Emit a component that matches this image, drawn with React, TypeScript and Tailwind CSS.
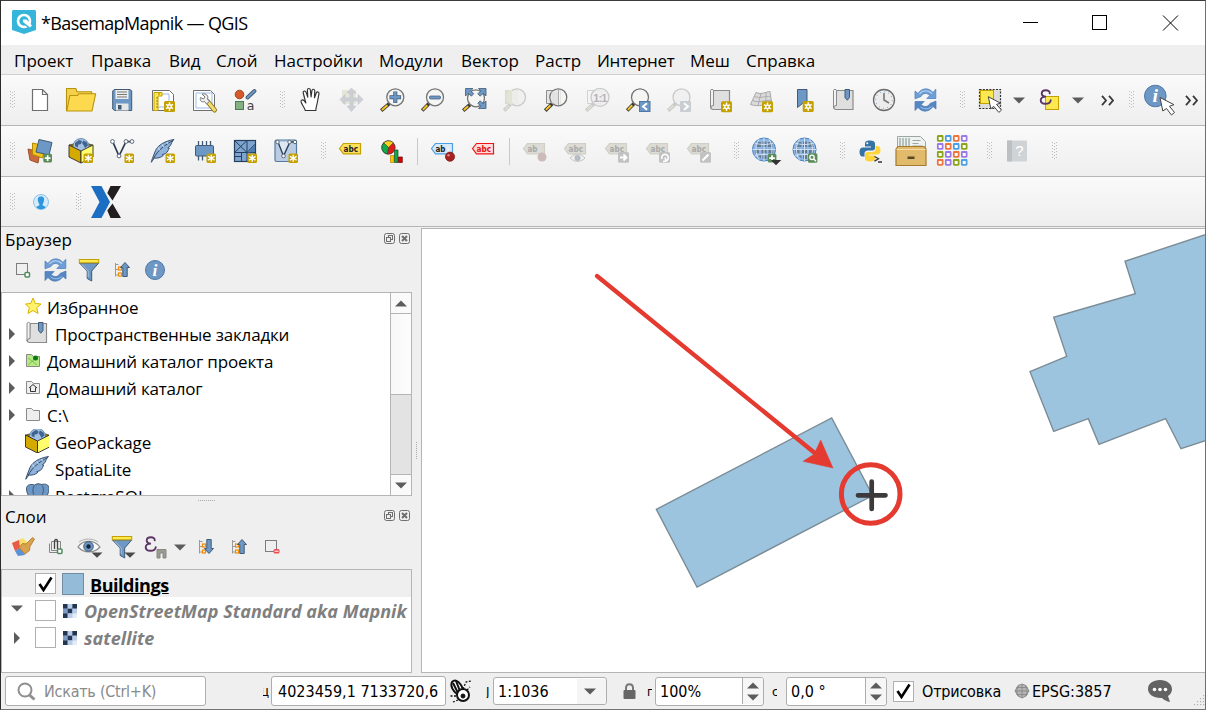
import type { ReactNode } from "react";

const BLUE = "#6d97c4";
const NAVY = "#415a75";

function Ic({ children, className = "" }: { children: ReactNode; className?: string }) {
  return (
    <svg width="32" height="32" viewBox="0 0 32 32" className={"shrink-0 overflow-visible " + className} fill="none">
      {children}
    </svg>
  );
}

function Handle({ className = "" }: { className?: string }) {
  const dots = [0, 1, 2, 3, 4, 5];
  return (
    <svg width="6" height="20" viewBox="0 0 6 20" className={"shrink-0 " + className} fill="#bdbdbd">
      {dots.map((i) => (
        <g key={i}>
          <rect x="1" y={1 + i * 3} width="1" height="1" />
          <rect x="3" y={2 + i * 3} width="1" height="1" />
          <rect x="5" y={1 + i * 3} width="1" height="1" />
        </g>
      ))}
    </svg>
  );
}

function Sep({ className = "" }: { className?: string }) {
  return <div className={"h-[27px] w-px shrink-0 bg-[#c9c9c9] " + className} />;
}

function Down({ className = "" }: { className?: string }) {
  return (
    <svg width="12" height="7" viewBox="0 0 12 7" className={"shrink-0 " + className}>
      <path d="M0 .5h12L6 6.5z" fill="#5c5c5c" />
    </svg>
  );
}

function Up() {
  return (
    <svg width="12" height="7" viewBox="0 0 12 7" className="shrink-0">
      <path d="M0 6.5h12L6 .5z" fill="#5c5c5c" />
    </svg>
  );
}

function More({ className = "" }: { className?: string }) {
  return (
    <svg width="13" height="11" viewBox="0 0 13 11" className={"shrink-0 " + className} fill="none" stroke="#3a3a3a" strokeWidth="1.8">
      <path d="M1 .8l4 4.7-4 4.7M8 .8l4 4.7-4 4.7" />
    </svg>
  );
}

function Gold({ x = 18.5, y = 18.5, s = 9.5 }: { x?: number; y?: number; s?: number }) {
  const c = s / 2;
  return (
    <g transform={`translate(${x} ${y})`}>
      <rect width={s} height={s} rx="1.5" fill="#c4a000" />
      <path
        d={`M${c} 1.2V${s - 1.2}M${1.4} ${c - 1.8}L${s - 1.4} ${c + 1.8}M${1.4} ${c + 1.8}L${s - 1.4} ${c - 1.8}`}
        stroke="#fff"
        strokeWidth="1.4"
      />
    </g>
  );
}

function GoldStar({ x, y }: { x: number; y: number }) {
  return (
    <g transform={`translate(${x} ${y})`}>
      <rect width="11" height="11" rx="1.5" fill="#c4a000" />
      <path d="M5.5 1.3v8.4M2 3.4l7 4.2M2 7.6l7-4.2" stroke="#fff" strokeWidth="1.5" />
      <circle cx="5.5" cy="5.5" r="2.4" fill="#fff" />
      <circle cx="5.5" cy="5.5" r="1.1" fill="#c4a000" />
    </g>
  );
}

function GreenPlus({ x, y, s = 8.7 }: { x: number; y: number; s?: number }) {
  return (
    <g transform={`translate(${x} ${y})`}>
      <rect width={s} height={s} rx="1.5" fill="#5a8c5a" />
      <path d={`M${s / 2} 1.5v${s - 3}M1.5 ${s / 2}h${s - 3}`} stroke="#fff" strokeWidth="1.7" />
    </g>
  );
}

function Lens({ x = 17, y = 13.3, r = 8.5, dim = false }: { x?: number; y?: number; r?: number; dim?: boolean }) {
  return (
    <g>
      <path d={`M${x - 6} ${y + 6.3}L4.2 26.6`} stroke={dim ? "#c8c8c8" : "#3a3a3a"} strokeWidth="3.6" />
      <path d={`M${x - 7.8} ${y + 8}L4.9 25.9`} stroke={dim ? "#deded2" : "#f7c423"} strokeWidth="2" />
      <circle cx={x} cy={y} r={r} fill={dim ? "#efefef" : "#f4f4f2"} fillOpacity="0.85" stroke={dim ? "#c9c9c9" : "#747474"} strokeWidth="1.3" />
    </g>
  );
}

function Refresh() {
  return (
    <g stroke="#4779b8" strokeWidth=".7">
      <path d="M5 7l3 2.5C12 3.500 19 3.500 23 8.500l2.800-3.300v9.300h-9l3-3C16.500 8.300 13 9 11 12.500L5 14.800z" fill="#6f9fd8" />
      <path d="M26 25l-3-2.500C19 28.500 12 28.500 8 23.500L5 26.500v-9h9.200l-3 3c3.300 3.200 6.800 2.500 8.800-1L26 17z" fill="#5487c4" />
      <path d="M9.500 10c3-4 8.500-4.500 12.500-.5" stroke="#b9d4f2" strokeWidth="1.200" />
      <path d="M21.500 22.500c-3 3-7.500 3-11 .5" stroke="#a4c4e8" strokeWidth="1" />
    </g>
  );
}

function BookmarkMap() {
  return (
    <g>
      <path d="M8.500 6.500h16.500v19H8c-3 0-3-4 0-4z" fill="#dfdfdf" stroke="#8b8b8b" strokeWidth="1.200" />
      <path d="M5.500 24V6.500c0-1.500 3-1.500 3 0v15c-2 0-3 1-3 2.500z" fill="#f2f2f2" stroke="#8b8b8b" />
      <path d="M17 5.500h4.500v8l-2.200 2.700-2.300-2.700z" fill={BLUE} stroke={NAVY} />
    </g>
  );
}

function GeoBox() {
  return (
    <g strokeLinejoin="round">
      <path d="M4 10l12-3 12 3-12 6z" fill="#8d7500" stroke="#2b2b2b" strokeWidth=".6" />
      <circle cx="16" cy="11.500" r="8" fill="#a4c0e2" stroke="#5c7fa8" strokeWidth=".8" />
      <path d="M10 8l4-3 3 1-1 3-3 .8v2.600l-3-1.400zM18.500 5.500l3.500 2 1 3-3 2.500-1.500-3-1.500-2z" fill="#3f648f" />
      <path d="M4 10l12 6v12L4 22z" fill="#d4aa00" stroke="#2b2b2b" strokeWidth=".9" />
      <path d="M28 10l-12 6v12l12-6z" fill="#ffff6e" stroke="#2b2b2b" strokeWidth=".9" />
    </g>
  );
}

function Feather() {
  return (
    <g>
      <path d="M27 4.500C18 6 11 10 8.500 15.500L6 22c-1 2.500-1.500 4-1.700 5.300 1-1.300 2-3 3-4.300 3 .5 6.500-.5 9-2.500l-1-.8 3.500-1.200c2-2 2.500-3.500 3.500-5.500l-1.500-.2 2.700-2.300c.8-2 1.800-4.500 3.500-6z" fill="#8fb2da" stroke="#36506e" strokeWidth="1" />
      <path d="M26 5.500C18 10 11 15 6.500 23.500" stroke="#2f4864" strokeWidth="1" />
      <path d="M11 12.500l2 3M15 9.500l2 2.500M20 7l1 2" stroke="#dce9f7" strokeWidth=".9" />
    </g>
  );
}

function Tag({ fill, stroke, color, text = "abc" }: { fill: string; stroke: string; color: string; text?: string }) {
  return (
    <g>
      <path d="M4.500 13.500l4-5H25.500v10.300H8.500z" fill={fill} stroke={stroke} strokeWidth="1.200" />
      <text x="8.500" y="16.800" fontSize="8.500" fontWeight="700" fontFamily="'DejaVu Sans', sans-serif" fill={color} textLength={text === "ab" ? 10 : 14.5} lengthAdjust="spacingAndGlyphs">
        {text}
      </text>
    </g>
  );
}

function GrayTag({ text = "abc" }: { text?: string }) {
  return <Tag fill="#dcdcd4" stroke="#cfcfc8" color="#a9a9a9" text={text} />;
}

function GrayBadge({ children }: { children: ReactNode }) {
  return (
    <g transform="translate(17 17)">
      <rect width="11" height="10.700" rx="1.500" fill="#c2c2c2" />
      {children}
    </g>
  );
}

function Globe({ x, y }: { x: number; y: number }) {
  return (
    <g transform={`translate(${x} ${y})`}>
      <circle r="11.500" fill="#8fb8e6" stroke="#4a80bf" />
      <path d="M-7-7.500h4v5h-5zM-1.500-8h4v5.500h-4zM4-7.500h3.500L9-2.500H4zM-9.500-.8h4.500v4.500h-4zM-2.500-.8h5v4.500h-5zM4.500-.8H9.500L9 3.700H4.500zM-7 5.500h4v3.500zM-1.500 5.500h4v4h-4zM4 5.500h3.500L4 9z" fill="#5d6a78" fillOpacity=".8" />
      <path d="M0-11.500v23M-11.500 0h23M-5-10.300c-4 6-4 14.600 0 20.600M5-10.300c4 6 4 14.600 0 20.600M-9.500-6.500c6 2 13 2 19 0M-9.500 6.500c6-2 13-2 19 0" stroke="#d8e9fb" strokeWidth=".9" />
    </g>
  );
}

function Epsilon() {
  return (
    <path
      d="M15.700 9.300c.2-2-1.700-3-3.700-3-2.600 0-4.300 1.400-4.300 3.300 0 1.700 1.400 2.900 4.300 3-3.500.1-5.300 1.500-5.300 3.600 0 2.200 1.900 3.500 4.800 3.500 2.600 0 4.800-1.100 5.200-3.400"
      stroke="#5c3566"
      strokeWidth="1.900"
      strokeLinecap="round"
    />
  );
}

function Funnel({ menu = false }: { menu?: boolean }) {
  return (
    <g>
      <path d="M6.500 9h19.200l-7 8v10l-4.500-2.500V17z" fill={BLUE} stroke={NAVY} strokeLinejoin="round" />
      <path d="M9 10.500l6.200 6.500v6" stroke="#a9c6e6" strokeWidth="1" />
      <rect x="6.300" y="5.500" width="19.400" height="3.300" fill="#fce94f" stroke="#c4a000" />
      {menu && <path d="M18.500 21.500h11l-5.500 5.300z" fill="#4a4a4a" />}
    </g>
  );
}

function TreeArrow({ up = false }: { up?: boolean }) {
  return (
    <g>
      <path d="M9.500 9v13.500M9.500 10.500h3M9.500 15.500h3M9.500 21h3" stroke="#9a9a9a" />
      <rect x="12.500" y="13" width="3" height="3" stroke="#f08c00" strokeWidth="1.200" />
      <rect x="12.500" y="19" width="3" height="3" stroke="#f08c00" strokeWidth="1.200" />
      <g transform={up ? "" : "translate(0 31) scale(1 -1)"}>
        <path d="M19 8.500l4.500 5h-2.300v9h-4.400v-9h-2.300z" fill={BLUE} stroke={NAVY} />
      </g>
    </g>
  );
}

function InfoDot({ x, y, r }: { x: number; y: number; r: number }) {
  return (
    <g>
      <circle cx={x} cy={y} r={r - 0.5} fill={BLUE} stroke="#4f78a8" />
      <text x={x} y={y + r * 0.56} textAnchor="middle" fontSize={r * 1.75} fontStyle="italic" fontWeight="700" fontFamily="'Liberation Serif', serif" fill="#fff">
        i
      </text>
    </g>
  );
}

const cursor = "l2.500 12 3-2.300 5 6 2.700-2.300-5-5.700 4-1.200z";

const toolsA: ReactNode[] = [
  <path d="M8.500 5.500h10l5 5v16h-15zM18.500 5.500v5h5" fill="#fff" stroke="#6f6f6f" strokeWidth="1.200" />,
  <g stroke="#b8930c" strokeWidth="1.100" strokeLinejoin="round">
    <path d="M1.500 27V4.500h9.300l1.200 3.300h14.700V14" fill="#f5d04c" />
    <path d="M1.800 27l3-15.500h7.700l1.500-1.800h16.700L27 27z" fill="#fcd94e" />
  </g>,
  <g>
    <path d="M6.700 7l1.500-1.500h16l1.500 1.500v19.500h-17l-2-1.500z" fill={BLUE} stroke={NAVY} />
    <path d="M9.500 6h13v9h-13z" fill="#eee" />
    <path d="M11 8h10M11 10.500h10M11 13h10" stroke="#777" />
    <path d="M10 19.500h12.500v7H10z" fill="#e6e6e6" />
    <path d="M12 21h3.500v4.500H12z" fill={NAVY} />
  </g>,
  <g>
    <path d="M5.500 6.500h17l4 4v16h-21z" fill="#fff" stroke="#6f6f6f" />
    <path d="M9 10h13v13H9z" stroke="#9bbbea" />
    <path d="M7 8.500h8v3.500h-4v14.500H7z" fill="#fce94f" stroke="#c4a000" />
    <path d="M9 14h2M9 17h2M9 20h2M9 23h2M12 9v2" stroke="#a38500" />
    <GoldStar x={17} y={17} />
  </g>,
  <g>
    <path d="M5.500 6.500h17l4 4v16h-21z" fill="#fff" stroke="#6f6f6f" />
    <path d="M8 9h16v15H8z" stroke="#9bbbea" />
    <path d="M20 18l6.500 8" stroke="#8b7a20" strokeWidth="5" strokeLinecap="round" />
    <path d="M20 18l6.500 8" stroke="#f2dc72" strokeWidth="3" strokeLinecap="round" />
    <path d="M14 10c4-1 7 2 5.500 5l2 2.500-3 2.500-2-2.500c-3 1.500-5-1.500-4-4l3 1.500 1.500-2z" fill="#eee" stroke="#777" />
  </g>,
  <g>
    <circle cx="10.500" cy="10.500" r="4.300" fill="#d45a2a" stroke="#a64520" />
    <path d="M18.500 13.500L25.500 7" stroke={NAVY} strokeWidth="3.800" strokeLinecap="round" />
    <path d="M18.500 13.500L25.500 7" stroke={BLUE} strokeWidth="2" strokeLinecap="round" />
    <rect x="6.500" y="17.500" width="8" height="8" fill="#84b084" stroke="#4b7a4b" />
    <text x="17.800" y="26" fontSize="12.500" fontFamily="'DejaVu Sans', sans-serif" fill="#444">a</text>
  </g>,
];

const toolsB: ReactNode[] = [
  <path d="M10.500 26.500c-1-3.500-3-5-4-8.500-.5-2 1.500-3 3-1l1.500 2L8.500 9c-.5-2 2-2.800 2.700-.8l1.600 5L12.500 6c0-2 2.600-2 2.800 0l.7 7 .8-6.500c.3-1.900 2.700-1.600 2.700.3l-.3 7 1.800-5c.7-1.600 2.800-1 2.500.8L22 18c-.3 3-1.500 5-1.500 8.500z" fill="#fff" stroke="#333" strokeWidth="1.100" strokeLinejoin="round" transform="translate(-.7 0) scale(1.05 1)" />,
  <g>
    <rect x="6" y="6" width="14" height="14" fill="#e6e5da" />
    <path d="M15.500 4l4.500 5h-3v5h5v-3.500l5 5-5 5V17h-5v5h3l-4.500 5.500L11 22h3v-5H9v3.500l-5-5 5-5V14h5V9h-3z" fill="#ccd0d4" stroke="#bfc3c8" strokeWidth=".6" />
  </g>,
  <g>
    <Lens x={18.3} />
    <path d="M12.500 13.300h11.600M18.300 7.500v11.600" stroke={NAVY} strokeWidth="4" />
    <path d="M13.100 13.300h10.400M18.300 8.100v10.400" stroke={BLUE} strokeWidth="2.400" />
  </g>,
  <g>
    <Lens />
    <rect x="11.500" y="12" width="11" height="3" rx="1" fill={BLUE} stroke={NAVY} strokeWidth=".7" />
  </g>,
  <g>
    <Lens y={14.3} />
    <path d="M6.500 4.500H14l-2.300 2.300 3 3-2.400 2.400-3-3L6.500 12zM27 4.500h-7.500l2.300 2.300-3 3 2.400 2.400 3-3L27 12zM27 24.500h-7.500l2.300-2.300-3-3 2.400-2.400 3 3L27 17z" fill={BLUE} stroke={NAVY} strokeWidth=".8" />
  </g>,
  <g>
    <rect x="5" y="6" width="13" height="14" fill="#dcdccb" />
    <Lens dim />
    <path d="M17 5.500v15.500a8 8 0 000-15.500z" fill="#e3e4d8" transform="rotate(180 14.500 13.300)" />
  </g>,
  <g>
    <path d="M5.500 6.500h14v13h-14z" fill="#e6e6e6" stroke="#8d8d8d" />
    <Lens x={17.3} />
    <path d="M10.500 7.500h7v12h-7z" fill="#ddd" fillOpacity=".8" />
    <path d="M17.500 5v16" stroke="#aaa" />
  </g>,
  <g>
    <path d="M5.500 6.500h14v13h-14z" stroke="#d2d2d2" />
    <Lens x={18} r={9} dim />
    <text x="11.300" y="17.500" fontSize="11" fontWeight="700" fontFamily="'Liberation Sans', sans-serif" fill="#b5b5b5" textLength="14">1:1</text>
  </g>,
  <g>
    <Lens />
    <rect x="16.500" y="17.500" width="10.500" height="10" fill={BLUE} stroke="#4f78a8" />
    <path d="M24 19.200l-4 3.300 4 3.300" stroke="#fff" strokeWidth="2" />
  </g>,
  <g>
    <Lens x={17.500} dim />
    <rect x="16" y="17" width="11" height="11" rx="1" fill="#c9ced2" />
    <path d="M20 19.200l4 3.300-4 3.300" stroke="#fff" strokeWidth="2" />
  </g>,
  <g>
    <path d="M8.500 6.500H24.500v19H8c-3 0-3-4 0-4z" fill="#dfdfdf" stroke="#8b8b8b" strokeWidth="1.200" />
    <path d="M5.500 24V6.500c0-1.500 3-1.500 3 0v15c-2 0-3 1-3 2.500z" fill="#f2f2f2" stroke="#8b8b8b" />
    <GoldStar x={16} y={17.300} />
  </g>,
  <g>
    <path d="M4.500 20.500L10 8.500c6 2.500 9-.5 14-1l2 14c-7-2-13 2-21.500-1z" fill="#dadada" stroke="#a8a8a8" />
    <path d="M6.500 16.500c7 3 12-1 19 0M8.500 12.500c6 2.500 11-1 16 0M15 9.500l-3 12M20 8.500v12" stroke="#a8a8a8" strokeWidth=".9" />
    <GoldStar x={16} y={17.300} />
  </g>,
  <g>
    <path d="M10.500 5.500H20v18l-4.500-4-5 4z" fill={BLUE} stroke={NAVY} />
    <GoldStar x={15.700} y={17} />
  </g>,
  <BookmarkMap />,
  <g>
    <circle cx="15" cy="16" r="10.500" fill="#ececec" stroke="#6b6b6b" strokeWidth="1.300" />
    <circle cx="15" cy="16" r="8.300" stroke="#6d97c4" strokeWidth="1" strokeDasharray="1 3.350" />
    <path d="M15 9v7l5 3" stroke="#777" strokeWidth="1.600" />
  </g>,
  <Refresh />,
];

const toolsC: ReactNode[] = [
  <g>
    <path d="M4 14l12 3-2 11-8-3z" fill="#c96a3c" stroke="#a14f28" />
    <path d="M8.500 8l13 3-3 12-10-3.500z" fill="#efc31f" stroke="#b58900" />
    <path d="M15 4.500L28 7.500 25 20 12 17z" fill={BLUE} stroke={NAVY} />
    <GreenPlus x={19.300} y={18.700} />
  </g>,
  <g><GeoBox /><Gold /></g>,
  <g>
    <path d="M6.700 6.700L13 21 20 6.700h6" stroke="#2e3e50" strokeWidth="1.700" />
    <g fill="#fff" stroke="#5b6b7c"><circle cx="6.500" cy="6.500" r="1.900" /><circle cx="20" cy="6.500" r="1.900" /><circle cx="26" cy="6.500" r="1.900" /><circle cx="13" cy="21" r="1.900" /></g>
    <Gold />
  </g>,
  <g><Feather /><Gold /></g>,
  <g>
    <path d="M10.500 6v5M14.500 6v5M18.500 6v5M22.500 6v5M10.500 21v4.500M14.500 21v4.500" stroke={NAVY} strokeWidth="1.300" />
    <rect x="7.500" y="10.500" width="18" height="10.500" rx="1" fill={BLUE} stroke={NAVY} />
    <Gold />
  </g>,
  <g>
    <rect x="5.500" y="5.500" width="21" height="21" fill="#7fa4cf" stroke="#24405e" strokeWidth="1.200" />
    <path d="M5.500 17.500h21M5.500 21.500h7M18 5.500v12l8.500-9M5.500 5.500l12.500 12M18 5.500l-12.500 12M12.500 17.500v9M18 17.500v9" stroke="#24405e" />
    <path d="M18.500 17.500L26 9v8z" fill="#4f7cb0" />
    <Gold />
  </g>,
  <g>
    <rect x="5" y="5" width="21.500" height="21.500" rx="1.500" fill="#b9cce4" stroke="#557a9f" strokeWidth="1.200" />
    <path d="M8 7l5 12 6-12z" fill="#dfe8f2" />
    <path d="M8 7l5.500 14L20 7h5" stroke="#2e3e50" strokeWidth="1.300" />
    <g fill="#fff" stroke="#5b6b7c"><circle cx="7.500" cy="7" r="1.700" /><circle cx="19.500" cy="7" r="1.700" /><circle cx="25" cy="7" r="1.700" /><circle cx="13.500" cy="21" r="1.800" /></g>
    <Gold />
  </g>,
];

const toolsE: ReactNode[] = [
  <g><GrayTag text="ab" /><path d="M20 11v6" stroke="#ddd" strokeWidth="2" /><circle cx="23" cy="22" r="4.500" fill="#cdbaba" /></g>,
  <g>
    <GrayTag />
    <path d="M10 23c4-5 11-5 15 0-4 4.500-11 4.500-15 0z" fill="#efefef" stroke="#c4c4c4" />
    <circle cx="17.500" cy="23" r="3" fill="#b7bcc2" />
  </g>,
  <g><GrayTag /><GrayBadge><path d="M2 5.500h6M5.500 2.500l3 3-3 3" stroke="#fff" strokeWidth="1.800" /></GrayBadge></g>,
  <g><GrayTag /><GrayBadge><path d="M3 7a3.300 3.300 0 113 2M6 5.500L7 9 4 9.500" stroke="#fff" strokeWidth="1.600" /></GrayBadge></g>,
  <g><GrayTag /><GrayBadge><path d="M2.500 8.500l6-6" stroke="#fff" strokeWidth="2.200" /></GrayBadge></g>,
];

const gridColors = ["#8aa617", "#4b9fe3", "#f0743e", "#9b7ae8"];
const gridOrder = [0, 1, 2, 3, 3, 2, 1, 0, 0, 3, 2, 3, 2, 3, 0, 1];

function Toolbar({ children, className = "" }: { children: ReactNode; className?: string }) {
  return <div className={"flex shrink-0 items-center border-b border-[#b6b6b6] bg-gradient-to-b from-[#fafafa] to-[#eeeeee] pl-2 " + className}>{children}</div>;
}

function Icons({ items, className = "" }: { items: ReactNode[]; className?: string }) {
  return (
    <div className={"flex shrink-0 gap-[9px] " + className}>
      {items.map((it, i) => <Ic key={i}>{it}</Ic>)}
    </div>
  );
}

function DockTitle({ title }: { title: string }) {
  return (
    <div className="flex h-[24px] shrink-0 items-center justify-between pb-[2px] pl-1">
      <span>{title}</span>
      <svg width="28" height="12" viewBox="0 0 28 12" fill="none" stroke="#6e6e6e">
        <rect x=".5" y=".5" width="10" height="10" rx="2" />
        <rect x="4.500" y="2.500" width="4" height="4" />
        <rect x="2.500" y="4.500" width="4" height="4" fill="#efefef" />
        <rect x="15.500" y=".5" width="10" height="10" rx="2" />
        <path d="M18 3l5 5M23 3l-5 5" strokeWidth="2" />
      </svg>
    </div>
  );
}

function Right({ className = "" }: { className?: string }) {
  return <svg width="6" height="12" viewBox="0 0 6 12" className={"shrink-0 " + className}><path d="M0 0l6 6-6 6z" fill="#5c5c5c" /></svg>;
}

function TreeRow({ icon, text, arrow = true, wide = false, track }: { icon: ReactNode; text: string; arrow?: boolean; wide?: boolean; track: string }) {
  return (
    <div className="flex h-[27px] shrink-0 items-center">
      <div className="flex w-[23px] shrink-0 pb-[2px] pl-[7px]">{arrow && <Right />}</div>
      <div className={wide ? "flex w-[30px] shrink-0" : "flex w-[22px] shrink-0"}>{icon}</div>
      <span className={"whitespace-nowrap " + track}>{text}</span>
    </div>
  );
}

function Big({ children }: { children: ReactNode }) {
  return <svg width="24" height="24" viewBox="3.500 4 24 24" fill="none" className="mb-1 shrink-0">{children}</svg>;
}

function FolderIcon({ children, fill = "#eee" }: { children?: ReactNode; fill?: string }) {
  return (
    <svg width="16" height="16" viewBox="0 0 16 16" fill="none" className="mb-1 shrink-0">
      <path d="M1.500 14.500v-12h5l2 2h6v10z" fill={fill} stroke="#8a8a8a" />
      {children}
    </svg>
  );
}

function Check({ on = false, className = "" }: { on?: boolean; className?: string }) {
  return (
    <span className={"flex size-[21px] shrink-0 items-center justify-center border border-[#b0b0b0] bg-white " + className}>
      {on && (
        <svg width="15" height="16" viewBox="0 0 15 16" fill="none">
          <path d="M1.500 8l4 6L13.500 1.500" stroke="#000" strokeWidth="2.600" />
        </svg>
      )}
    </span>
  );
}

function Raster() {
  const cells = ["#24364f", "#b9cdea", "#24364f", "#7c9cc6", "#24364f", "#b9cdea", "#24364f", "#b9cdea", "#e4ecf7"];
  return (
    <svg width="14" height="14" viewBox="0 0 14 14" className="shrink-0">
      <rect width="14" height="14" fill="#a9c1e3" />
      {cells.map((c, i) => <rect key={i} x={(i % 3) * 4.7} y={Math.floor(i / 3) * 4.7} width="4.700" height="4.700" fill={c} />)}
    </svg>
  );
}

const field = "flex shrink-0 items-center rounded-[3px] border border-[#aeaeae] bg-white pt-px ";

function Spin() {
  return (
    <div className="-mt-px ml-auto flex h-full w-[21px] flex-col items-center justify-center gap-[5px] border-l border-[#aeaeae] bg-[#f6f6f6]">
      <Up />
      <Down />
    </div>
  );
}

export default function App() {
  return (
    <div className="flex h-[710px] w-[1206px] flex-col overflow-hidden border border-t-[#3b3b3b] border-r-[#6f6f6f] border-b-[#747474] border-l-[#2b2b2b] bg-[#efefef] font-['Open_Sans','Noto_Sans',sans-serif] text-[17px] leading-none text-black">
      <div className="flex h-[44px] shrink-0 items-center bg-white pl-[11px]">
        <svg width="24" height="24" viewBox="0 0 24 24" fill="none" className="mb-0.5">
          <path d="M1 0h22l1 1v19l-12 4-12-4V1z" fill="#35b5d9" />
          <circle cx="12" cy="11" r="6" stroke="#fff" strokeWidth="2.600" />
          <path d="M11.500 11l6.500 6" stroke="#35b5d9" strokeWidth="4" />
          <path d="M11 9.500h3.500L20 15.500l-2 2L11 12z" fill="#fff" />
        </svg>
        <span className="ml-[5px] text-[18px] tracking-[-0.62px] whitespace-nowrap">*BasemapMapnik — QGIS</span>
        <svg width="156" height="16" viewBox="0 0 156 16" fill="none" stroke="#000" className="mr-[26px] ml-auto">
          <path d="M0 7.500h15M140 .5l15 15M155 .5l-15 15" />
          <rect x="69.500" y=".5" width="14" height="14" />
        </svg>
      </div>
      <div className="flex h-[30px] shrink-0 items-center border-b border-[#d0d0d0] pt-[2px] pl-[13px] whitespace-nowrap">
        <span className="w-[77px]">Проект</span>
        <span className="w-[78px]">Правка</span>
        <span className="w-[47px]">Вид</span>
        <span className="w-[58px]">Слой</span>
        <span className="w-[105px]">Настройки</span>
        <span className="w-[82px]">Модули</span>
        <span className="w-[74px]">Вектор</span>
        <span className="w-[62px]">Растр</span>
        <span className="w-[93px] tracking-[-0.3px]">Интернет</span>
        <span className="w-[56px]">Меш</span>
        <span>Справка</span>
      </div>

      <Toolbar className="h-[51px]">
        <Handle />
        <Icons items={toolsA} className="ml-[9px]" />
        <Handle className="ml-[18px]" />
        <Icons items={toolsB} className="ml-[10px]" />
        <Handle className="ml-[17px]" />
        <Ic className="ml-[9px]">
          <path d="M5.500 5.500h21v19h-21z" fill="#ddd" stroke="#333" strokeWidth="1.200" strokeDasharray="2 1.300" />
          <rect x="6.500" y="6.500" width="13" height="13" fill="#fce94f" stroke="#c4a000" />
          <path d={"M14.300 12.700" + cursor} fill="#fff" stroke="#444" />
        </Ic>
        <Down className="ml-[7px]" />
        <Ic className="ml-[9px]">
          <rect x="11.500" y="12.500" width="13" height="13" fill="#fce94f" stroke="#c4a000" />
          <Epsilon />
        </Ic>
        <Down className="ml-[6px]" />
        <More className="ml-[17px]" />
        <Handle className="ml-[14px]" />
        <Ic className="ml-[8px]">
          <InfoDot x={13.3} y={12} r={11.300} />
          <path d={"M18 13.500l2.800 13.500 3.700-2.500 5 6.500 3-2.500-5-6.300 4.500-1.500z"} fill="#fff" stroke="#444" />
        </Ic>
        <More className="ml-[11px]" />
      </Toolbar>

      <Toolbar className="h-[51px]">
        <Handle />
        <Icons items={toolsC} className="ml-[9px]" />
        <Handle className="ml-[18px]" />
        <Ic className="ml-[9px]"><Tag fill="#fce05a" stroke="#c4a000" color="#222" /></Ic>
        <Ic className="ml-[8px]">
          <circle cx="13.500" cy="12.500" r="6.700" fill="#e01b1b" stroke="#333" strokeWidth=".7" />
          <path d="M13.500 12.500L9 7.500a6.700 6.700 0 009.500-.5z" fill="#ffd21a" />
          <path d="M13.500 12.500L9 7.500a6.700 6.700 0 003.500 11.600z" fill="#0fae46" stroke="#333" strokeWidth=".6" />
          <path d="M13.500 12.500L8.700 7.800a6.700 6.700 0 019.600 0z" fill="#ffd21a" stroke="#333" strokeWidth=".6" />
          <path d="M15.500 20.500h3.500v7h-3.500z" fill="#ffc400" stroke="#b98500" strokeWidth=".7" />
          <path d="M19.500 15h3.500v12.500h-3.500z" fill="#12a84a" stroke="#134d22" strokeWidth=".7" />
          <path d="M23.500 22h3.800v5.500h-3.800z" fill="#d00" stroke="#600" strokeWidth=".7" />
        </Ic>
        <Sep className="ml-[10px]" />
        <Ic className="ml-[9px]">
          <Tag fill="#d6e9ff" stroke="#4b9fe3" color="#222" text="ab" />
          <path d="M20.500 12l2 6" stroke="#eee" strokeWidth="2.200" />
          <circle cx="23" cy="21.700" r="4.600" fill="#a8201f" stroke="#761414" strokeWidth=".7" />
          <circle cx="21.500" cy="20.200" r="1.200" fill="#e08a8a" />
        </Ic>
        <Ic className="ml-[9px]"><Tag fill="#ffdcdc" stroke="#f01414" color="#e01010" /></Ic>
        <Sep className="ml-[9px]" />
        <Icons items={toolsE} className="ml-[9px]" />
        <Handle className="ml-[18px]" />
        <Ic className="ml-[11px]">
          <Globe x={14} y={14.500} />
          <GreenPlus x={17.700} y={18.700} />
          <path d="M20.700 25h10.600L26 30.300z" fill="#333" />
        </Ic>
        <Ic className="ml-[7px]">
          <Globe x={15.500} y={14.500} />
          <rect x="19" y="18.300" width="9.400" height="9.400" rx="1.500" fill="#5a8c5a" />
          <circle cx="23" cy="22.300" r="2.200" stroke="#fff" strokeWidth="1.300" />
          <path d="M24.700 24l2.300 2.300" stroke="#fff" strokeWidth="1.500" />
        </Ic>
        <Handle className="ml-[18px]" />
        <Ic className="ml-[9px]">
          <path d="M16 5.500c-4 0-5 1.500-5 3v3h6v1H9c-2.500 0-3.500 2-3.500 4.500s1 4.500 3 4.500h2v-3c0-2 1.500-3 3.500-3h4.500c1.500 0 2.500-1 2.500-2.500V8.500c0-2-2-3-5-3z" fill="#3673a5" />
          <path d="M16 26.500c4 0 5-1.500 5-3v-3h-6v-1h8c2.500 0 3.500-2 3.500-4.300 0-2.500-1-4.200-3-4.200h-2v3c0 2-1.500 3-3.500 3h-4.500c-1.500 0-2.500 1-2.500 2.500v4.500c0 1.500 2 2.500 5 2.500z" fill="#ffd43b" />
          <circle cx="13.300" cy="8.300" r="1" fill="#fff" />
          <path d="M20.500 21.500l4 2.300-4 2.300M24 27h4" stroke="#333" strokeWidth="1.300" />
        </Ic>
        <Ic className="ml-[9px]">
          <path d="M2.500 1.500h23l5 5v8h-28z" fill="#eef2f0" stroke="#9aa8a4" />
          <path d="M5 3v9M8 3v9M11 3v9M14 3v9" stroke="#7d8f8a" />
          <path d="M17.500 5.500h8M17.500 8.500h6M17.500 11h10" stroke="#9aa8a4" />
          <path d="M1 14l2-2.500h26l2 2.500v16.500H1z" fill="#e2ba6c" stroke="#a67b2d" strokeWidth="1.200" />
          <path d="M1.500 14.500h29" stroke="#f6dda6" />
          <rect x="12" y="21" width="8" height="3.500" fill="#5c4a1e" stroke="#d9b878" />
        </Ic>
        <Ic className="ml-[9px]">
          {gridOrder.map((c, i) => (
            <rect key={i} x={1.800 + (i % 4) * 8} y={1 + Math.floor(i / 4) * 8} width="4.800" height="4.800" rx=".5" fill="#fff" stroke={gridColors[c]} strokeWidth="1.800" />
          ))}
        </Ic>
        <Handle className="ml-[18px]" />
        <Ic className="ml-[9px]">
          <rect x="6" y="5.500" width="20" height="21" rx="1" fill="#cfd3d6" />
          <rect x="6" y="5.500" width="5" height="21" fill="#bcc0c4" />
          <text x="18.500" y="21" textAnchor="middle" fontSize="15" fontFamily="'Liberation Sans', sans-serif" fill="#fff">?</text>
        </Ic>
        <Handle className="ml-[18px]" />
      </Toolbar>

      <Toolbar className="h-[50px]">
        <Handle />
        <Ic className="ml-[10px]">
          <circle cx="16" cy="16" r="7.500" fill="#d5eafb" stroke="#8dc1ea" />
          <path d="M16 10.500c2.800 0 3.500 2 3 4.500-.4 1.700-1 2.500-1.500 3.500 0 1.500 3 1.500 3 3-2.500 2.300-6.500 2.300-9 0 0-1.500 3-1.500 3-3-.5-1-1.100-1.800-1.500-3.500-.5-2.500.2-4.500 3-4.500z" fill="#2d97de" />
        </Ic>
        <Handle className="ml-[18px]" />
        <Ic className="ml-[10px]">
          <path d="M0 0h10.500L19 16l-8.500 16H0l8.500-16z" fill="#1b6ec2" />
          <path d="M19.500 0h10.500L21.500 14.500 16.300 7zM16.300 24.500l5.200-7L30 32H19.500z" fill="#231f20" />
        </Ic>
      </Toolbar>

      <div className="flex min-h-0 flex-1">
        <div className="flex w-[411px] shrink-0 flex-col pt-[1px]">
          <DockTitle title="Браузер" />
          <div className="flex h-[40px] shrink-0 items-center gap-px pb-[4px] pl-[6px]">
            <Ic>
              <rect x="9.500" y="9.500" width="11" height="11" stroke="#7d7d7d" />
              <rect x="18" y="18.500" width="4.500" height="4.500" rx="1" fill="#fff" stroke="#4f8a5c" strokeWidth="1.500" />
            </Ic>
            <Ic><Refresh /></Ic>
            <Ic><Funnel /></Ic>
            <Ic><TreeArrow up /></Ic>
            <Ic><InfoDot x={16} y={16} r={10} /></Ic>
          </div>
          <div className="flex h-[204px] shrink-0 overflow-hidden border border-[#b5b5b5] bg-white">
            <div className="flex flex-1 flex-col overflow-hidden pt-[1px]">
              <TreeRow arrow={false} track="tracking-[-0.1px]" text="Избранное" icon={
                <svg width="18" height="18" viewBox="1 0 18 18" className="mb-1">
                  <path d="M9 1l2.300 5.500 5.700.5-4.300 3.800 1.300 5.700L9 13.500l-5 3 1.300-5.700L1.500 7l5.200-.5z" fill="#fff36b" stroke="#d9b300" />
                </svg>} />
              <TreeRow wide track="tracking-[-0.18px]" text="Пространственные закладки" icon={<Big><BookmarkMap /></Big>} />
              <TreeRow track="tracking-[-0.16px]" text="Домашний каталог проекта" icon={<FolderIcon fill="#b8e986"><path d="M3 13l9-8M3 6l9 7" stroke="#7cc242" /><circle cx="10.500" cy="6" r="2.500" fill="#0b7a1d" /></FolderIcon>} />
              <TreeRow track="tracking-[-0.2px]" text="Домашний каталог" icon={<FolderIcon><path d="M4 9l4-3.500L12 9M5.500 8.500v4h5v-4" stroke="#333" /></FolderIcon>} />
              <TreeRow track="" text="C:\" icon={<FolderIcon />} />
              <TreeRow wide arrow={false} track="tracking-[-0.1px]" text="GeoPackage" icon={<Big><GeoBox /></Big>} />
              <TreeRow wide arrow={false} track="tracking-[-0.15px]" text="SpatiaLite" icon={<Big><Feather /></Big>} />
              <TreeRow wide track="" text="PostgreSQL" icon={
                <Big>
                  <path d="M5 10c0-5 5-5 8-4 2-1.500 5-1.500 7-.5 4-1 7.500 0 7.500 4s-2.500 10-5 10-3 7-6 7-2-6-4-7-7-1-7.500-9.500z" fill={BLUE} stroke={NAVY} />
                  <path d="M13 6.500c-3 3-1 9 0 12M20 6c3 2 2 8 0 11" stroke={NAVY} />
                </Big>} />
            </div>
            <div className="flex w-[21px] shrink-0 flex-col border-l border-[#b5b5b5] bg-[#e3e3e3]">
              <div className="flex h-[21px] items-center justify-center border-b border-[#b5b5b5] bg-[#fafafa]"><Up /></div>
              <div className="h-[81px] border-b border-[#b5b5b5] bg-gradient-to-r from-[#f7f7f7] to-[#fdfdfd]" />
              <div className="mt-auto flex h-[21px] items-center justify-center border-t border-[#b5b5b5] bg-[#fafafa]"><Down /></div>
            </div>
          </div>
          <div className="flex h-[9px] shrink-0 justify-center pt-[4px]">
            <div className="h-px w-[17px] border-t border-dotted border-[#aaaaaa]" />
          </div>
          <DockTitle title="Слои" />
          <div className="flex h-[40px] shrink-0 items-center gap-px pb-[4px] pl-[6px]">
            <Ic>
              <path d="M5 12l11-5 6 6-5 10-6 2z" fill="#f8df6a" />
              <path d="M5 12l3 8 5-3-1-8z" fill="#ea5a48" />
              <path d="M8 20l3 5 7-1-5-7z" fill="#5a92d8" />
              <path d="M12 16.500l6 6.500 4.500-3.500.5-4L27.500 8l-2-1.500-6.500 6.500-3.500-.5z" fill="#d9a24c" stroke="#a8742a" strokeWidth=".8" />
            </Ic>
            <Ic>
              <path d="M9.500 12.500v9h9M11.500 10.500h9v9h-9z" stroke="#858585" />
              <path d="M14.500 18v-8c0-2 3-2 3 0v8" stroke="#444" strokeWidth="1.300" />
              <rect x="17.500" y="18" width="4.500" height="4.500" rx="1" fill="#fff" stroke="#4f8a5c" strokeWidth="1.500" />
            </Ic>
            <Ic>
              <path d="M5 16c5-7.500 16-7.500 22 0-6 6.500-16 6.500-22 0z" fill="#fafafa" stroke="#8c8c8c" strokeWidth="1.200" />
              <path d="M6 11c5-4 14-4 19 0" stroke="#b0b0b0" />
              <circle cx="15.500" cy="15.500" r="4.800" fill={BLUE} stroke={NAVY} />
              <circle cx="15.500" cy="15.500" r="2.200" fill="#14263c" />
              <path d="M18.500 21.500h11L24 26.800z" fill="#4a4a4a" />
            </Ic>
            <Ic><Funnel menu /></Ic>
            <Ic>
              <Epsilon />
              <path d="M18 27V18.500h9V27h-3v-5h-3v5z" fill="#999a90" stroke="#888" />
            </Ic>
            <Down className="ml-[2px]" />
            <Ic className="ml-[3px]"><TreeArrow /></Ic>
            <Ic><TreeArrow up /></Ic>
            <Ic>
              <rect x="9.500" y="9.500" width="11" height="11" stroke="#7d7d7d" />
              <rect x="17.500" y="18" width="6" height="4.500" rx="1.500" fill="#ef4b55" />
              <path d="M18.500 20.200h4" stroke="#fff" />
            </Ic>
          </div>
          <div className="flex h-[104px] shrink-0 flex-col border border-[#b5b5b5] bg-white text-[18px] font-bold">
            <div className="flex h-[27px] items-center bg-[#efefef] pl-[33px]">
              <Check on />
              <span className="ml-[6px] size-[22px] border border-[#6f8ea6] bg-[#94bbd8]" />
              <span className="ml-[6px] pt-[2px] leading-none tracking-[-0.45px] underline">Buildings</span>
            </div>
            <div className="flex h-[27px] items-center pl-[9px] text-[#7f7f7f] italic">
              <Down className="mb-1" />
              <Check className="ml-[12px]" />
              <span className="ml-[7px]"><Raster /></span>
              <span className="ml-[7px] pt-px tracking-[0.04px] whitespace-nowrap">OpenStreetMap Standard aka Mapnik</span>
            </div>
            <div className="flex h-[27px] items-center pl-[12px] text-[#7f7f7f] italic">
              <Right />
              <Check className="ml-[15px]" />
              <span className="ml-[7px]"><Raster /></span>
              <span className="ml-[7px] pt-px tracking-[0.04px]">satellite</span>
            </div>
          </div>
        </div>
        <div className="flex w-[9px] shrink-0 items-center justify-center">
          <div className="h-[17px] w-px border-l border-dotted border-[#aaaaaa]" />
        </div>
        <div className="mt-px mb-0 flex h-[445px] flex-1 border border-r-0 border-[#b5b5b5] bg-white">
          <svg width="783" height="443" viewBox="422 229 783 443" fill="none">
            <g fill="#9dc4df" stroke="#7b8c96" strokeWidth="1.400">
              <path d="M656.300 509.300L831.700 418l41 77.500L697 587z" />
              <path d="M1210 233l-85 28.300 10.300 32.400-81.600 23.600 13 39-36.700 15.400 23.700 59.600 34.600-12.600 10.700 25.600 66.700-25.600L1181 448.700l29-9.500z" />
            </g>
            <path d="M597 276l219 178" stroke="#e43a30" strokeWidth="4.300" strokeLinecap="round" />
            <path d="M833 468l-30-6.700 11-7 6.700-14.300z" fill="#e43a30" stroke="#e43a30" strokeWidth=".5" />
            <circle cx="870.700" cy="494" r="29.300" stroke="#e43a30" strokeWidth="5" />
            <path d="M858 495.300h27.500M871.700 481.500V509" stroke="#3c3a3b" strokeWidth="4.700" strokeLinecap="round" />
          </svg>
        </div>
      </div>

      <div className="flex h-[36px] shrink-0 items-center pl-[4px] font-['DejaVu_Sans_Condensed','DejaVu_Sans',sans-serif] text-[16px] whitespace-nowrap">
        <div className={field + "h-[30px] w-[201px] gap-[8px] pl-[11px] text-[#8a8a8a]"}>
          <svg width="19" height="19" viewBox="0 0 19 19" fill="none" stroke="#8f8f8f">
            <circle cx="8" cy="8" r="6.500" strokeWidth="2" />
            <path d="M12.500 13l5 4.500" strokeWidth="3" />
          </svg>
          <span className="tracking-[-0.25px]">Искать (Ctrl+K)</span>
        </div>
        <span className="ml-[57px] flex w-[6px] justify-end overflow-hidden pt-px pb-[2px] text-[14px]">ц</span>
        <div className={field + "ml-[2px] h-[30px] w-[175px] pl-[6px]"}>4023459,1 7133720,6</div>
        <svg width="24" height="26" viewBox="0 0 24 26" fill="none" stroke="#111" className="ml-[3px] shrink-0">
          <path d="M3 4c3-3 6-1 9 3l2 4-6 5C4 13 1 8 3 4z" fill="#fff" strokeWidth="2" />
          <path d="M7 3l4 10M4 5l5 10" strokeWidth="2" />
          <circle cx="14" cy="17" r="6" fill="#fff" strokeWidth="2" />
          <circle cx="14" cy="18" r="2" fill="#111" />
          <path d="M14 11l3-7 5-1M18 12l3-3M7 18l-6 0M9 22l-5 2" strokeWidth="1.300" strokeDasharray="2 1.500" />
        </svg>
        <span className="ml-[13px] w-[5px] overflow-hidden pt-px text-[13px]">J</span>
        <div className={field + "ml-[2px] h-[28px] w-[114px] overflow-hidden pl-[4px]"}>
          1:1036
          <div className="-mt-px ml-auto flex h-full w-[29px] items-center justify-center bg-[#f4f4f4] pr-1"><Down /></div>
        </div>
        <svg width="13" height="17" viewBox="0 0 13 17" fill="none" className="ml-[16px] shrink-0">
          <path d="M3 8V5c0-5 7-5 7 0v3" stroke="#777" strokeWidth="2" />
          <rect x=".5" y="7" width="12" height="9" rx="1" fill="#666" />
        </svg>
        <span className="ml-[11px] w-[5px] overflow-hidden text-[13px]">г</span>
        <div className={field + "ml-[3px] h-[29px] w-[109px] overflow-hidden pl-[4px]"}>100%<Spin /></div>
        <span className="ml-[8px] w-[5px] overflow-hidden text-[13px]">с</span>
        <div className={field + "ml-[9px] h-[29px] w-[101px] overflow-hidden pl-[4px]"}>0,0 °<Spin /></div>
        <Check on className="ml-[6px]" />
        <span className="ml-[8px] w-[78px] pt-px tracking-[-0.2px]">Отрисовка</span>
        <svg width="16" height="16" viewBox="0 0 16 16" fill="none" className="ml-[14px] shrink-0" stroke="#888" strokeWidth=".9">
          <path d="M1 8L4 2.500 8 1l4 1.500L15 8l-3 5-4 2-4-2z" fill="#b5b5b5" />
          <path d="M8 1v14M1 8h14M4.500 2.500c-2 4-2 7 0 11M11.500 2.500c2 4 2 7 0 11M2.500 4.500h11M2.500 11.500h11" />
        </svg>
        <span className="ml-[2px] w-[81px] pt-px">EPSG:3857</span>
        <svg width="25" height="24" viewBox="0 0 25 24" className="ml-[35px] shrink-0">
          <path d="M12 1c7 0 12 4 12 9 0 3-1.500 5.500-4 7l2 6c-3-.5-6-2-8-4-8 .500-14-3.500-14-9S5 1 12 1z" fill="#636363" />
          <g fill="#fff"><circle cx="6.500" cy="10.500" r="1.800" /><circle cx="12" cy="10.500" r="1.800" /><circle cx="17.500" cy="10.500" r="1.800" /></g>
        </svg>
        <svg width="11" height="11" viewBox="0 0 11 11" fill="#b0b0b0" className="mt-auto mb-[3px] ml-auto shrink-0">
          {[0, 1, 2, 3].flatMap((r) => Array.from({ length: r + 1 }, (_, c) => <rect key={`${r}-${c}`} x={9 - c * 3} y={r * 3} width="1.200" height="1.200" />))}
        </svg>
      </div>
    </div>
  );
}
